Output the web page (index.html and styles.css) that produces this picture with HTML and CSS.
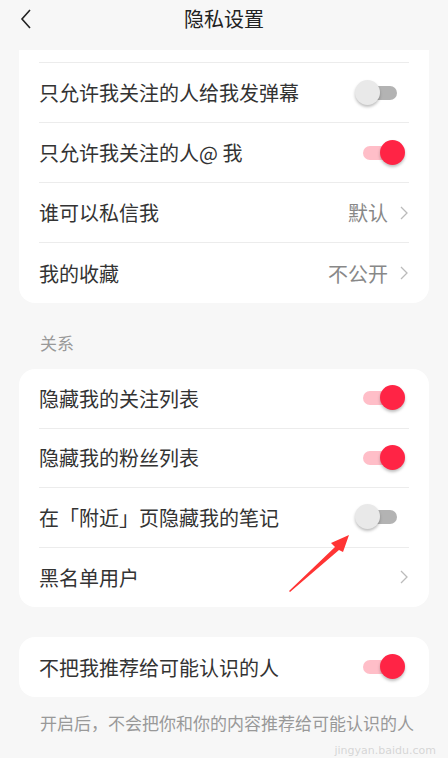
FILE: index.html
```html
<!DOCTYPE html>
<html lang="zh-CN">
<head>
  <meta charset="UTF-8" />
  <meta name="viewport" content="width=device-width, initial-scale=1.0"/>
  <title>隐私设置</title>
  <link rel="stylesheet" href="styles.css">
</head>
<body>
  <header class="topbar">
    <svg class="back" width="12" height="20" viewBox="0 0 12 20"><polyline points="10,1 2,10 10,19" fill="none" stroke="#222" stroke-width="1.6"/></svg>
    <h1>隐私设置</h1>
  </header>

  <main class="content">
    <section class="card card-first">
      <div class="row"><span class="label">谁可以看我的收藏</span><span class="switch off"><i></i></span></div>
      <div class="row"><span class="label">只允许我关注的人给我发弹幕</span><span class="switch off"><i></i></span></div>
      <div class="row"><span class="label">只允许我关注的人@ 我</span><span class="switch on"><i></i></span></div>
      <div class="row"><span class="label">谁可以私信我</span><span class="value">默认</span><svg class="chev" width="8" height="14" viewBox="0 0 8 14"><polyline points="1,1 7,7 1,13" fill="none" stroke="#bbb" stroke-width="1.3"/></svg></div>
      <div class="row"><span class="label">我的收藏</span><span class="value">不公开</span><svg class="chev" width="8" height="14" viewBox="0 0 8 14"><polyline points="1,1 7,7 1,13" fill="none" stroke="#bbb" stroke-width="1.3"/></svg></div>
    </section>

    <p class="section-title">关系</p>
    <section class="card card-rel">
      <div class="row"><span class="label">隐藏我的关注列表</span><span class="switch on"><i></i></span></div>
      <div class="row"><span class="label">隐藏我的粉丝列表</span><span class="switch on"><i></i></span></div>
      <div class="row"><span class="label">在「附近」页隐藏我的笔记</span><span class="switch off"><i></i></span></div>
      <div class="row"><span class="label">黑名单用户</span><svg class="chev" width="8" height="14" viewBox="0 0 8 14"><polyline points="1,1 7,7 1,13" fill="none" stroke="#bbb" stroke-width="1.3"/></svg></div>
    </section>

    <section class="card card-single">
      <div class="row"><span class="label">不把我推荐给可能认识的人</span><span class="switch on"><i></i></span></div>
    </section>
    <p class="note">开启后，不会把你和你的内容推荐给可能认识的人</p>
  </main>

  <!-- annotation arrow drawn over the screenshot -->
  <svg class="pointer" width="448" height="758" viewBox="0 0 448 758">
    <polygon points="289,591 335,547 331,543 349,535 343,552 339,550 290,592" fill="#ff3434"/>
  </svg>
  <span class="watermark">jingyan.baidu.com</span>
</body>
</html>
```

FILE: styles.css
```css
body { margin:0; width:448px; height:758px; overflow:hidden; background:#f7f7f7; font-family:"Noto Sans CJK SC", "Noto Sans", sans-serif; color:#333; position:relative; }
.topbar { height:50px; position:relative; z-index:2; background:#f7f7f7; display:flex; justify-content:center; }
.topbar h1 { margin:0; font-size:20px; font-weight:normal; line-height:38px; color:#222; }
.back { position:absolute; left:20px; top:9px; }
.content { position:relative; z-index:1; }
.card { background:#fff; margin:0 19px 0 19px; border-radius:16px; }
.card-first { margin-top:-47px; border-radius:0 0 16px 16px; }
.row { height:60px; margin:0 20px 0 20px; border-bottom:1px solid #ececec; display:flex; align-items:center; box-sizing:border-box; }
.card-rel .row { height:59.5px; }
.row:last-child { border-bottom:none; }
.label { flex:1; font-size:20px; white-space:nowrap; }
.value { font-size:20px; color:#888; margin-right:12px; }
.chev { margin-right:1px; }
.switch { width:50px; height:26px; position:relative; margin-right:4px; }
.switch:before { content:""; position:absolute; left:8px; right:8px; top:6px; height:14px; border-radius:7px; }
.switch i { position:absolute; top:0; width:25px; height:25px; border-radius:50%; box-shadow:0 2px 3px rgba(0,0,0,0.25); }
.switch.off:before { background:#b3b3b3; }
.switch.off i { left:0; background:#e9e9e9; }
.switch.on:before { background:#ffbec8; }
.switch.on i { right:0; background:#ff2445; }
.section-title { margin:0; padding:30px 40px 16px; font-size:17px; line-height:20px; color:#999; }
.card-single { margin-top:30px; }
.note { margin:0; padding:15px 0 0 40px; font-size:17px; line-height:22px; color:#999; white-space:nowrap; }
.pointer { position:absolute; left:0; top:0; z-index:3; pointer-events:none; }
.watermark { position:absolute; right:12px; bottom:0; z-index:3; font-family:"DejaVu Sans", sans-serif; font-size:11px; line-height:14px; color:rgba(180,180,180,0.5); }
```
